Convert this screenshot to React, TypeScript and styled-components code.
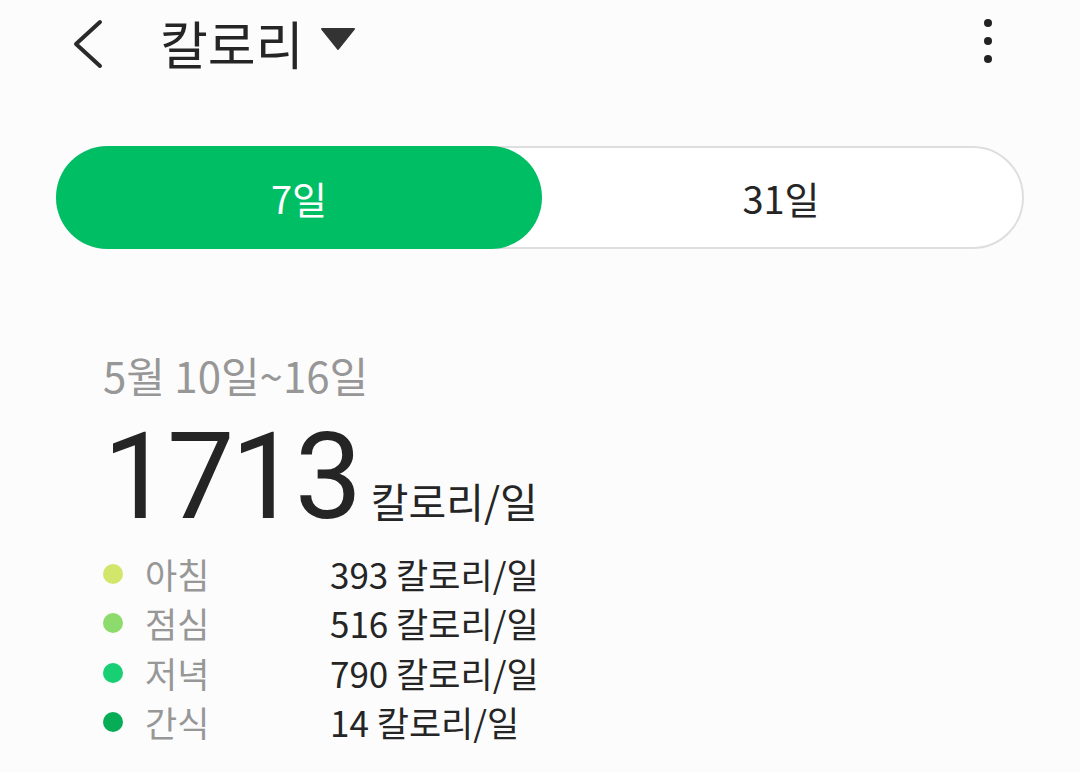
import React, { useState } from 'react';
import styled, { createGlobalStyle } from 'styled-components';

const GlobalStyle = createGlobalStyle`
  html, body {
    margin: 0;
    padding: 0;
    background: #fcfcfc;
    font-family: 'Noto Sans CJK KR', 'Noto Sans', sans-serif;
    color: #252525;
  }
`;

const colors = {
  green: '#00be64',
  text: '#252525',
  muted: '#979797',
  border: '#dedede',
};

type Meal = { label: string; value: number; color: string };

const meals: Meal[] = [
  { label: '아침', value: 393, color: '#d3e66c' },
  { label: '점심', value: 516, color: '#8edb6d' },
  { label: '저녁', value: 790, color: '#18cf73' },
  { label: '간식', value: 14, color: '#07ad56' },
];

const ranges = ['7일', '31일'];

export default function App() {
  const [range, setRange] = useState(0);
  return (
    <Page>
      <GlobalStyle />
      <Header>
        <BackButton aria-label='back'>
          <svg width='34' height='50' viewBox='0 0 34 50' fill='none'>
            <path d='M29 3 L5 25 L29 47' stroke='#2a2a2a' strokeWidth='4' strokeLinecap='round' strokeLinejoin='round' />
          </svg>
        </BackButton>
        <Title>
          칼로리
          <svg width='36' height='24' viewBox='0 0 36 24'>
            <path d='M2 2 H34 L18 22 Z' fill='#333' stroke='#333' strokeWidth='2' strokeLinejoin='round' />
          </svg>
        </Title>
        <Kebab aria-label='more'>
          <i />
          <i />
          <i />
        </Kebab>
      </Header>

      <Segmented>
        {ranges.map((r, i) => (
          <Segment key={r} active={range === i} onClick={() => setRange(i)}>
            {r}
          </Segment>
        ))}
      </Segmented>

      <Summary>
        <DateRange>5월 10일~16일</DateRange>
        <Total>
          <Big>1713</Big>
          <Unit>칼로리/일</Unit>
        </Total>
        <Legend>
          {meals.map((m) => (
            <LegendRow key={m.label}>
              <Dot color={m.color} />
              <MealLabel>{m.label}</MealLabel>
              <MealValue>{m.value} 칼로리/일</MealValue>
            </LegendRow>
          ))}
        </Legend>
      </Summary>
    </Page>
  );
}

const Page = styled.div`
  width: 1080px;
  height: 772px;
  overflow: hidden;
  display: flex;
  flex-direction: column;
`;

const Header = styled.header`
  height: 90px;
  display: flex;
  align-items: center;
  padding: 0 88px 0 71px;
`;

const BackButton = styled.button`
  border: none;
  background: none;
  padding: 0;
  margin-right: 55px;
  display: flex;
  align-items: center;
  margin-top: -2px;
`;

const Title = styled.h1`
  margin: 0;
  font-size: 52px;
  font-weight: 400;
  line-height: 1;
  display: flex;
  align-items: center;
  gap: 16px;
  color: ${colors.text};
  margin-top: -4px;

  svg {
    margin-top: -8px;
  }
`;

const Kebab = styled.button`
  margin-left: auto;
  border: none;
  background: none;
  padding: 0;
  display: flex;
  flex-direction: column;
  gap: 10px;
  margin-top: -8px;

  i {
    width: 8px;
    height: 8px;
    border-radius: 50%;
    background: #222;
  }
`;

const Segmented = styled.div`
  margin: 56px 56px 0 56px;
  height: 103px;
  box-sizing: border-box;
  border: 2px solid ${colors.border};
  border-radius: 52px;
  background: #fff;
  display: flex;
`;

const Segment = styled.button<{ active: boolean }>`
  flex: 1;
  margin: -2px;
  border: none;
  border-radius: 52px;
  background: ${(p) => (p.active ? colors.green : 'transparent')};
  color: ${(p) => (p.active ? '#fff' : colors.text)};
  font-family: inherit;
  font-size: 38px;
  font-weight: 400;
  cursor: pointer;
`;

const Summary = styled.section`
  padding: 104px 0 0 103px;
  display: flex;
  flex-direction: column;
`;

const DateRange = styled.div`
  font-size: 42px;
  line-height: 44px;
  color: ${colors.muted};
`;

const Total = styled.div`
  display: flex;
  align-items: baseline;
  gap: 12px;
  margin-top: 18px;
`;

const Big = styled.span`
  font-family: Roboto, 'Noto Sans', sans-serif;
  font-size: 120px;
  line-height: 124px;
  font-weight: 400;
  letter-spacing: -3.5px;
`;

const Unit = styled.span`
  font-size: 41px;
  line-height: 44px;
`;

const Legend = styled.div`
  display: flex;
  flex-direction: column;
  margin-top: 10px;
`;

const LegendRow = styled.div`
  display: flex;
  align-items: center;
  height: 49.5px;
  line-height: 42px;
`;

const Dot = styled.span<{ color: string }>`
  width: 20px;
  height: 20px;
  border-radius: 50%;
  background: ${(p) => p.color};
  margin-right: 22px;
`;

const MealLabel = styled.span`
  width: 185px;
  font-size: 35px;
  color: ${colors.muted};
`;

const MealValue = styled.span`
  font-size: 35px;
  color: ${colors.text};
`;
